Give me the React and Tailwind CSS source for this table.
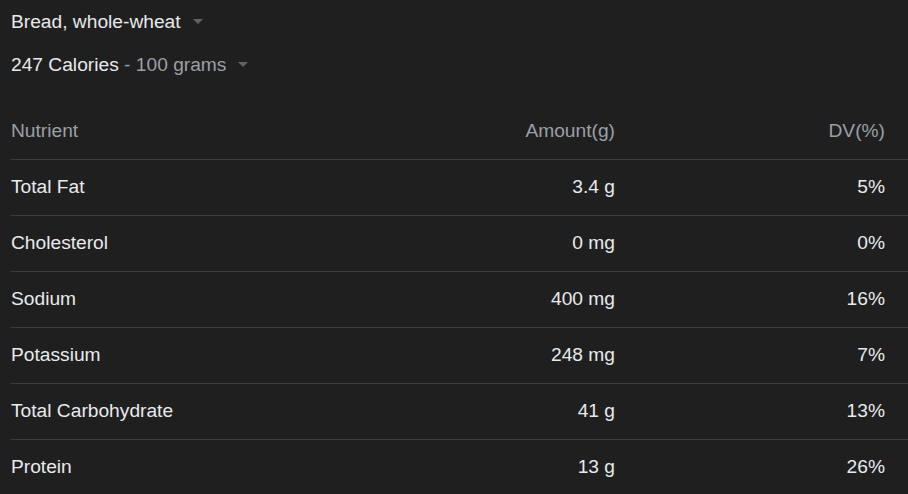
import React from "react";

const rows = [
  ["Total Fat", "3.4 g", "5%"],
  ["Cholesterol", "0 mg", "0%"],
  ["Sodium", "400 mg", "16%"],
  ["Potassium", "248 mg", "7%"],
  ["Total Carbohydrate", "41 g", "13%"],
  ["Protein", "13 g", "26%"],
];

function Caret() {
  return (
    <svg width="10" height="5" viewBox="0 0 10 5" className="ml-[12px] mt-[-2px]">
      <path d="M0 0 L10 0 L5 5 Z" fill="#5f6368" />
    </svg>
  );
}

export default function App() {
  return (
    <div
      className="w-[908px] h-[494px] overflow-hidden bg-[#1f1f1f] pl-[11px] pt-[10px] text-[19.2px] text-[#e8eaed]"
      style={{ fontFamily: '"Liberation Sans", Arial, sans-serif' }}
    >
      <div className="flex items-center h-[24px] leading-[24px]">
        <span>Bread, whole-wheat</span>
        <Caret />
      </div>
      <div className="flex items-center h-[24px] leading-[24px] mt-[19px]">
        <span>247 Calories</span>
        <span className="text-[#9aa0a6] whitespace-pre"> - 100 grams</span>
        <Caret />
      </div>
      <div className="mt-[26px]">
        <div className="flex items-center h-[56px] text-[#9aa0a6] pr-[23px]">
          <div className="flex-1">Nutrient</div>
          <div className="w-[200px] text-right">Amount(g)</div>
          <div className="w-[270px] text-right">DV(%)</div>
        </div>
        {rows.map(([n, a, d]) => (
          <div
            key={n}
            className="flex items-center h-[56px] box-border border-t border-[#3c3c3c] pr-[23px]"
          >
            <div className="flex-1">{n}</div>
            <div className="w-[200px] text-right">{a}</div>
            <div className="w-[270px] text-right">{d}</div>
          </div>
        ))}
      </div>
    </div>
  );
}
